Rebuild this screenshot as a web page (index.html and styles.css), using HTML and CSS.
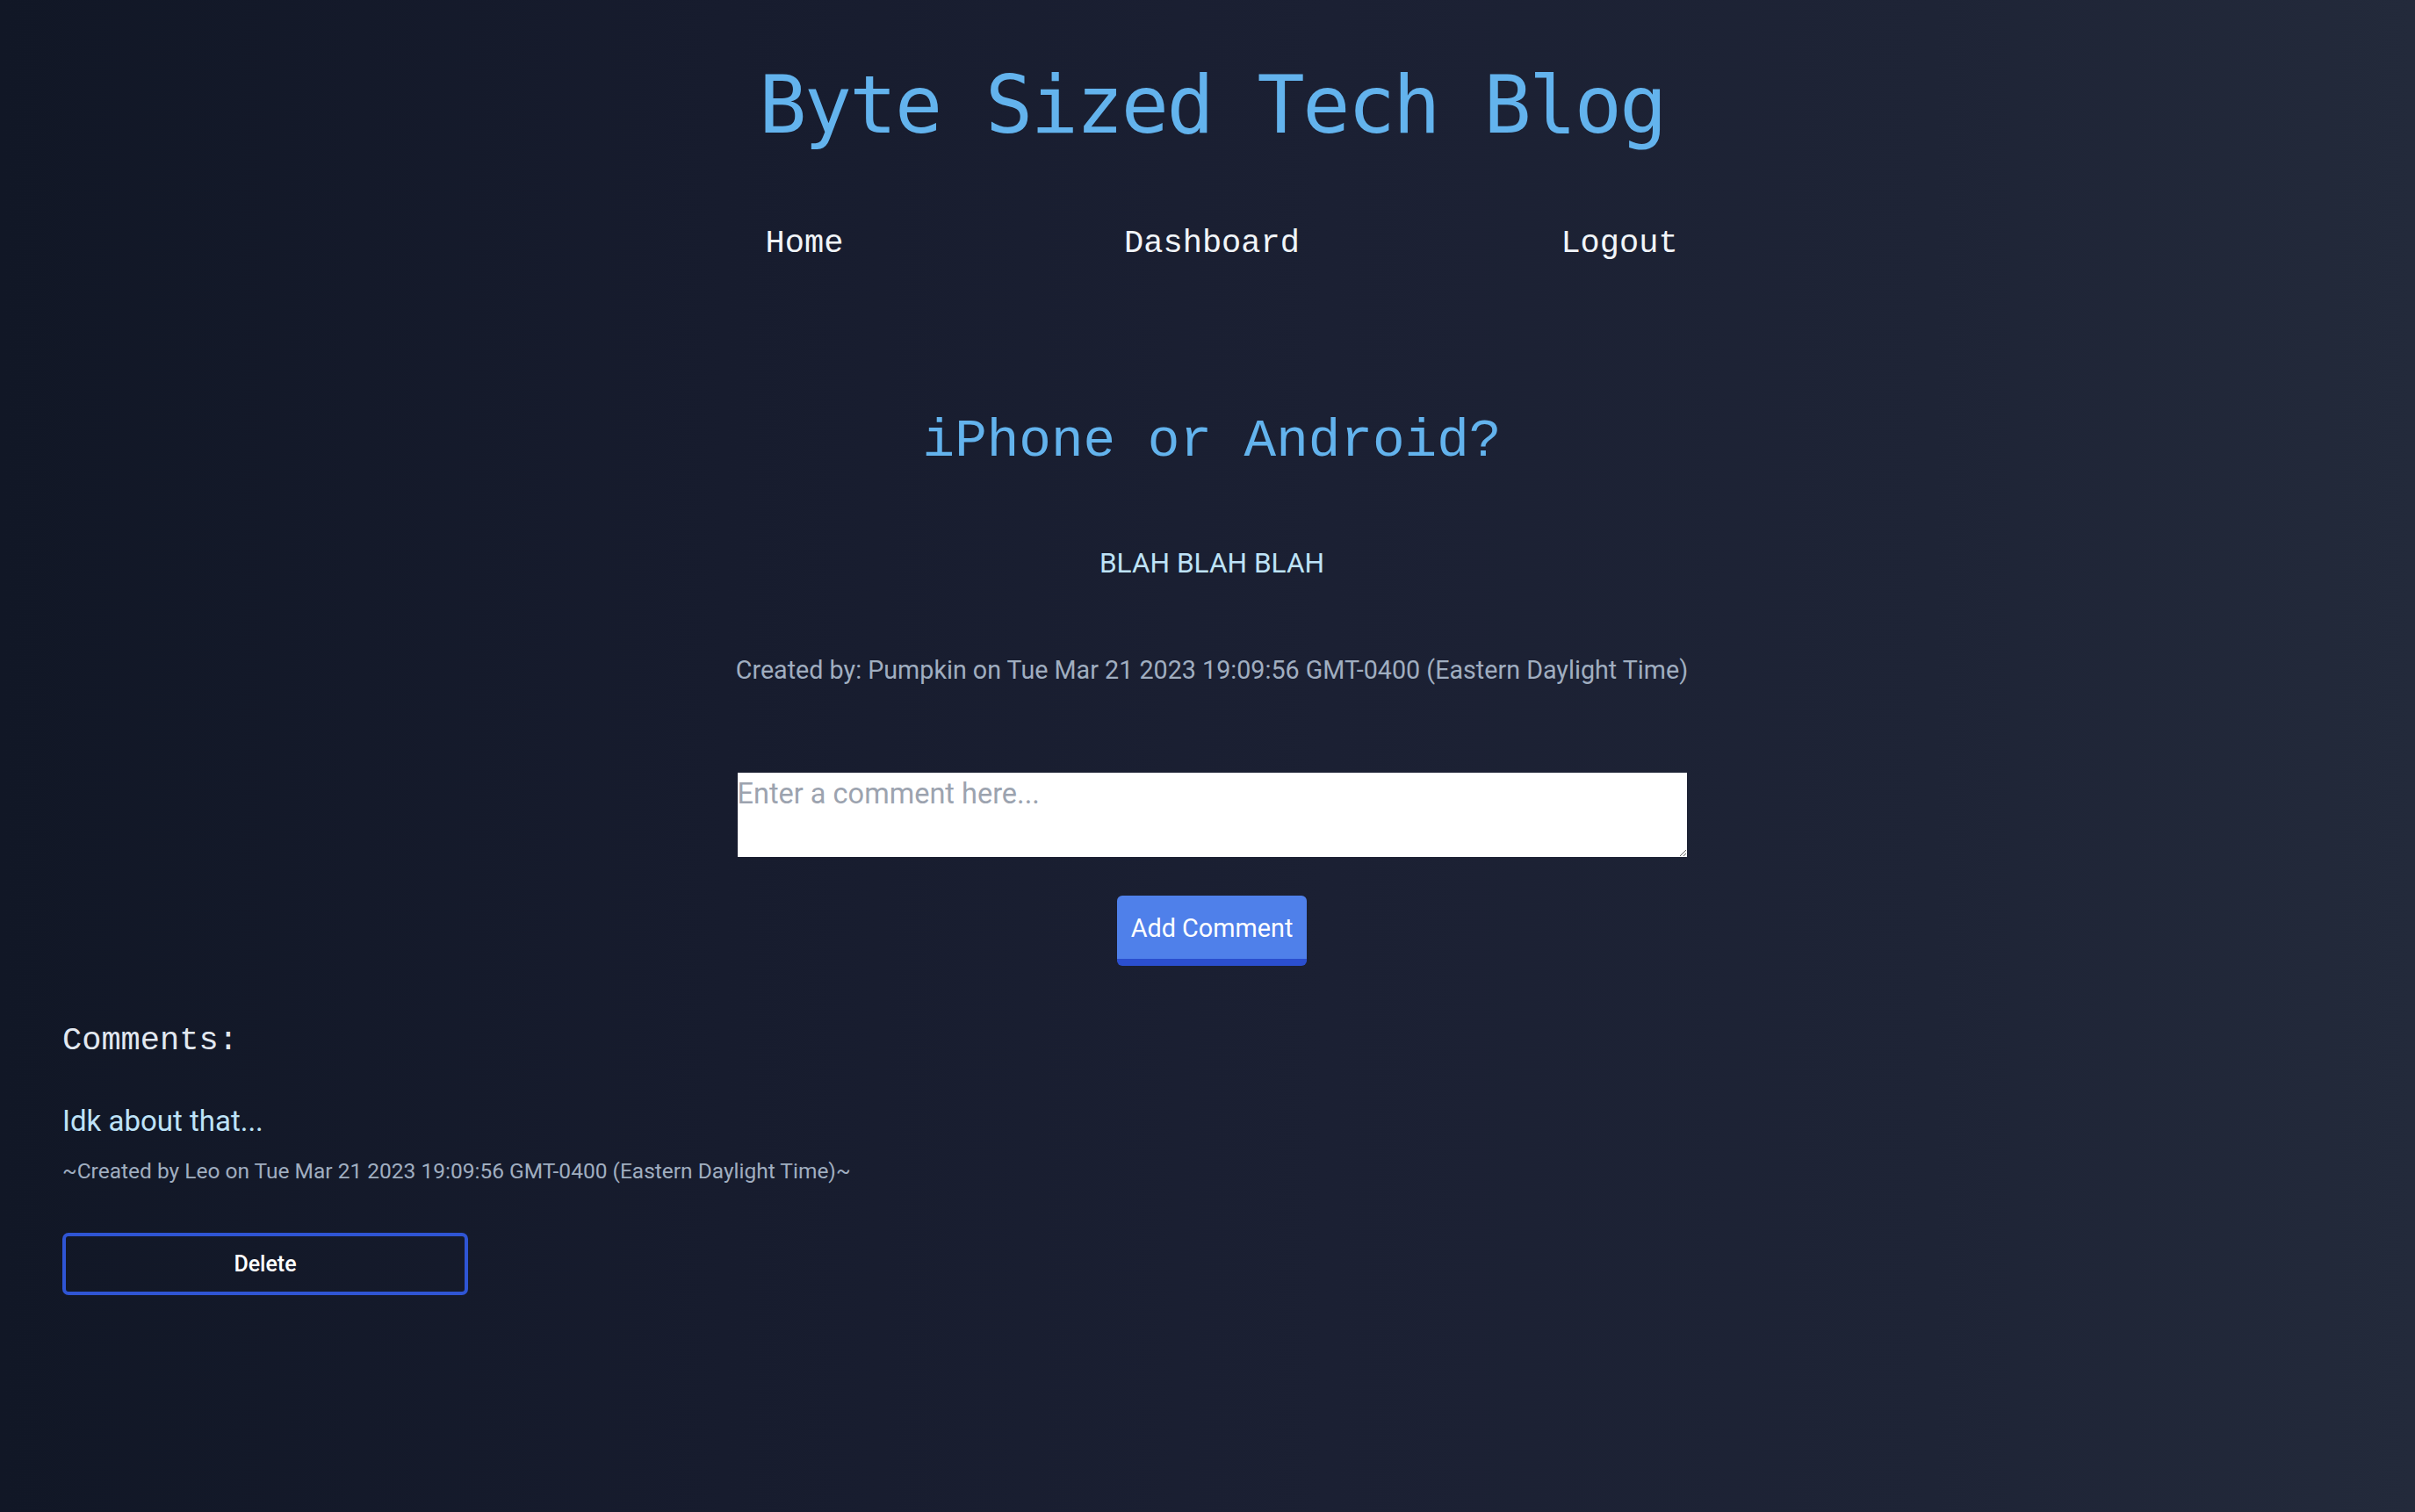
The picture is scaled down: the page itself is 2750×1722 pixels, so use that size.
FILE: index.html
```html
<!DOCTYPE html>
<html lang="en">
<head>
<meta charset="utf-8">
<title>Byte Sized Tech Blog</title>
<link rel="stylesheet" href="styles.css">
</head>
<body>
<div class="page">
  <header class="header">
    <h1 class="site-title">Byte Sized Tech Blog</h1>
    <nav class="nav">
      <a class="nav-link" href="#">Home</a>
      <a class="nav-link" href="#">Dashboard</a>
      <a class="nav-link" href="#">Logout</a>
    </nav>
  </header>

  <main class="post">
    <h2 class="post-title">iPhone or Android?</h2>
    <p class="post-body">BLAH BLAH BLAH</p>
    <p class="post-meta">Created by: Pumpkin on Tue Mar 21 2023 19:09:56 GMT-0400 (Eastern Daylight Time)</p>
    <form class="comment-form">
      <textarea class="comment-input" placeholder="Enter a comment here..."></textarea>
      <button type="button" class="btn-add">Add Comment</button>
    </form>
  </main>

  <section class="comments">
    <h3 class="comments-title">Comments:</h3>
    <div class="comment">
      <p class="comment-text">Idk about that...</p>
      <p class="comment-meta">~Created by Leo on Tue Mar 21 2023 19:09:56 GMT-0400 (Eastern Daylight Time)~</p>
      <button type="button" class="btn-delete">Delete</button>
    </div>
  </section>
</div>
</body>
</html>
```

FILE: styles.css
```css
html, body {
  margin: 0;
  padding: 0;
}

body {
  min-height: 1722px;
  background: linear-gradient(to right, #111726 0%, #171c2e 30%, #1b2033 55%, #1e2436 80%, #232a3b 100%);
  font-family: Roboto, "Liberation Sans", sans-serif;
  color: #e2e8f0;
}

.page {
  padding: 0 0 0 10px;
}

.header {
  padding-top: 75px;
  display: flex;
  flex-direction: column;
  align-items: center;
}

.site-title {
  margin: 0;
  font-family: "DejaVu Sans Mono", monospace;
  font-weight: normal;
  font-size: 90px;
  line-height: 90px;
  letter-spacing: -2.6px;
  color: #63b3ed;
}

.nav {
  margin-top: 94px;
  width: 1392px;
  display: grid;
  grid-template-columns: 1fr 1fr 1fr;
}

.nav-link {
  font-family: "Liberation Mono", monospace;
  font-size: 37px;
  line-height: 37px;
  color: #f1f5f9;
  text-decoration: none;
  text-align: center;
}

.post {
  display: flex;
  flex-direction: column;
  align-items: center;
}

.post-title {
  margin: 176px 0 0;
  font-family: "Liberation Mono", monospace;
  font-weight: normal;
  font-size: 61px;
  line-height: 61px;
  color: #63b3ed;
}

.post-body {
  margin: 93px 0 0;
  font-size: 31.6px;
  line-height: 31px;
  color: #bee3f8;
}

.post-meta {
  margin: 92px 0 0;
  font-size: 28.7px;
  line-height: 28px;
  color: #a0aec0;
}

.comment-form {
  margin-top: 103px;
  display: flex;
  flex-direction: column;
  align-items: center;
}

.comment-input {
  box-sizing: border-box;
  width: 1081px;
  height: 96px;
  margin: 0;
  padding: 5px 0 0;
  border: none;
  background: #ffffff;
  font-family: Roboto, "Liberation Sans", sans-serif;
  font-size: 32.5px;
  color: #1a202c;
  outline: none;
}

.comment-input::placeholder {
  color: #9ca3af;
}

.btn-add {
  margin-top: 44px;
  box-sizing: border-box;
  height: 80px;
  padding: 23px 16px 21px;
  border: none;
  border-bottom: 8px solid #2b4fcf;
  border-radius: 6px;
  background: #4f80ea;
  font-family: Roboto, "Liberation Sans", sans-serif;
  font-size: 28.8px;
  line-height: 28px;
  color: #ffffff;
}

.comments {
  padding-left: 61px;
}

.comments-title {
  margin: 67px 0 0;
  font-family: "Liberation Mono", monospace;
  font-weight: normal;
  font-size: 37px;
  line-height: 36px;
  color: #e2e8f0;
}

.comment-text {
  margin: 58px 0 0;
  font-size: 33px;
  line-height: 32px;
  color: #bee3f8;
}

.comment-meta {
  margin: 29px 0 0;
  font-size: 24.5px;
  line-height: 24px;
  color: #a0aec0;
}

.btn-delete {
  display: block;
  margin-top: 58px;
  box-sizing: border-box;
  width: 462px;
  height: 71px;
  padding: 0;
  border: 4px solid #2f55d4;
  border-radius: 7px;
  background: transparent;
  font-family: Roboto, "Liberation Sans", sans-serif;
  font-weight: 500;
  font-size: 25px;
  line-height: 25px;
  color: #ffffff;
}
```
